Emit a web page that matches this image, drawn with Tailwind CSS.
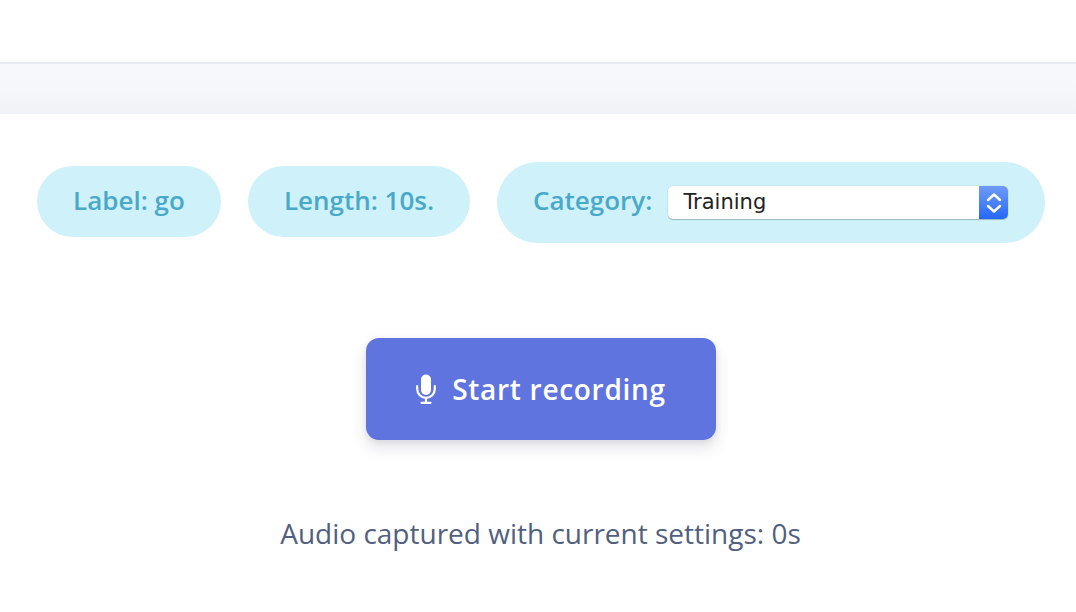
<!DOCTYPE html>
<html lang="en">
  <head>
    <meta charset="UTF-8" />
    <meta name="viewport" content="width=device-width, initial-scale=1.0" />
    <title>Record audio</title>
    <script src="https://cdn.jsdelivr.net/npm/@tailwindcss/browser@4"></script>
  </head>
  <body class="bg-white h-[612px] overflow-hidden font-['Open_Sans',sans-serif]">
    <!-- Top bar -->
    <div class="h-[62px] bg-white"></div>
    <div class="h-[52px] border-t-2 border-[#e9ecef] bg-gradient-to-b from-[#f6f8fc] via-[#f5f7fb] to-[#f0f2f6]"></div>

    <!-- Sample info -->
    <div class="mt-[48px] flex items-start pl-[37px] gap-[27px] text-[#4aa9c9] font-semibold text-[26px]">
      <div class="mt-[4px] w-[184px] h-[71px] rounded-full bg-[#cff1fa] flex items-center justify-center pb-[2px]">Label: go</div>
      <div class="mt-[4px] w-[222px] h-[71px] rounded-full bg-[#cff1fa] flex items-center justify-center pb-[2px]">Length: 10s.</div>
      <div class="w-[548px] h-[81px] rounded-full bg-[#cff1fa] flex items-center pl-[36px]">
        <span class="pb-[4px]">Category:</span>
        <!-- Native looking select -->
        <div class="ml-[16px] w-[340px] h-[33px] rounded-[5px] bg-white flex items-center shadow-[0_1px_1px_rgba(40,80,90,0.3),0_0_0_0.5px_rgba(40,80,90,0.1)] overflow-hidden">
          <span class="flex-1 pl-[15px] text-[21px] font-normal text-[#222] font-['DejaVu_Sans',sans-serif]">Training</span>
          <span class="w-[29px] h-full bg-gradient-to-b from-[#6f9bf6] to-[#2467f8] flex items-center justify-center">
            <svg width="16" height="24" viewBox="0 0 16 24" fill="none" stroke="#fff" stroke-width="2.4" stroke-linecap="round" stroke-linejoin="round">
              <path d="M2 9 8 3.500 14 9" />
              <path d="M2 15 8 20.500 14 15" />
            </svg>
          </span>
        </div>
      </div>
    </div>

    <!-- Record button -->
    <div class="mt-[95px] flex justify-center pl-[6px]">
      <button class="w-[350px] h-[102px] rounded-[13px] bg-[#5f74de] text-white flex items-center justify-center gap-[16px] font-semibold text-[28px] tracking-[0.7px] shadow-[0_8px_16px_rgba(50,50,93,0.13),0_2px_6px_rgba(0,0,0,0.08)]">
        <svg width="20" height="30" viewBox="0 0 20 30" fill="#fff">
          <rect x="5" y="0.500" width="10" height="20.500" rx="5" />
          <path d="M1.200 12v3a8.800 8.800 0 0 0 17.600 0v-3" fill="none" stroke="#fff" stroke-width="2.200" stroke-linecap="round" />
          <path d="M10 24v4.500M5.500 28.800h9" fill="none" stroke="#fff" stroke-width="2.200" stroke-linecap="round" />
        </svg>
        <span>Start recording</span>
      </button>
    </div>

    <p class="mt-[72px] text-center pl-[5px] text-[28px] leading-[42px] text-[#525f7f]">Audio captured with current settings: 0s</p>
  </body>
</html>
